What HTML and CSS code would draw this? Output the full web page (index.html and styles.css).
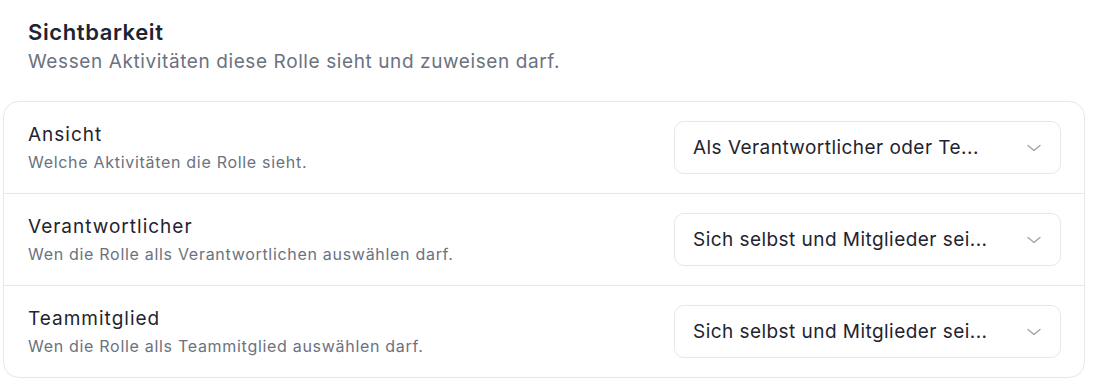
FILE: index.html
```html
<!DOCTYPE html>
<html lang="de">
<head>
<meta charset="utf-8">
<link rel="stylesheet" href="styles.css">
</head>
<body>
<section class="section">
  <header class="section-head">
    <h2 class="section-title">Sichtbarkeit</h2>
    <p class="section-desc">Wessen Aktivitäten diese Rolle sieht und zuweisen darf.</p>
  </header>
  <div class="card">
    <div class="row">
      <div class="row-text">
        <div class="row-label">Ansicht</div>
        <div class="row-hint">Welche Aktivitäten die Rolle sieht.</div>
      </div>
      <div class="select">
        <span class="select-value">Als Verantwortlicher oder Te...</span>
        <svg class="chev" width="14" height="8" viewBox="0 0 14 8"><path d="M1 1.5l6 5 6-5" fill="none" stroke="#9ca3af" stroke-width="1.3" stroke-linecap="round" stroke-linejoin="round"/></svg>
      </div>
    </div>
    <div class="row">
      <div class="row-text">
        <div class="row-label">Verantwortlicher</div>
        <div class="row-hint">Wen die Rolle alls Verantwortlichen auswählen darf.</div>
      </div>
      <div class="select">
        <span class="select-value">Sich selbst und Mitglieder sei...</span>
        <svg class="chev" width="14" height="8" viewBox="0 0 14 8"><path d="M1 1.5l6 5 6-5" fill="none" stroke="#9ca3af" stroke-width="1.3" stroke-linecap="round" stroke-linejoin="round"/></svg>
      </div>
    </div>
    <div class="row">
      <div class="row-text">
        <div class="row-label">Teammitglied</div>
        <div class="row-hint">Wen die Rolle alls Teammitglied auswählen darf.</div>
      </div>
      <div class="select">
        <span class="select-value">Sich selbst und Mitglieder sei...</span>
        <svg class="chev" width="14" height="8" viewBox="0 0 14 8"><path d="M1 1.5l6 5 6-5" fill="none" stroke="#9ca3af" stroke-width="1.3" stroke-linecap="round" stroke-linejoin="round"/></svg>
      </div>
    </div>
  </div>
</section>
</body>
</html>
```
FILE: styles.css
```css
* { box-sizing: border-box; }
html, body { margin: 0; padding: 0; background: #ffffff; }
body {
  font-family: Inter, "Noto Sans", sans-serif;
  color: #1f2430;
  padding: 18px 17px 0 3px;
}
.section-head {
  padding-left: 25px;
  margin-bottom: 27px;
}
.section-title {
  margin: 0;
  font-size: 22px;
  line-height: 28px;
  font-weight: 600;
  color: #1d2433;
  letter-spacing: 0.6px;
}
.section-desc {
  margin: 4px 0 0;
  font-size: 19px;
  line-height: 24px;
  color: #6b7280;
  letter-spacing: 0.6px;
}
.card {
  border: 1px solid #e5e7eb;
  border-radius: 16px;
  overflow: hidden;
}
.row {
  display: flex;
  align-items: center;
  justify-content: space-between;
  padding: 19px 23px 19px 24px;
}
.row + .row { border-top: 1px solid #e5e7eb; }
.row-label {
  font-size: 19px;
  line-height: 24px;
  color: #1f2430;
  letter-spacing: 1px;
}
.row-hint {
  margin-top: 5px;
  font-size: 16px;
  line-height: 20px;
  color: #6b7280;
  letter-spacing: 0.7px;
}
.select {
  width: 387px;
  height: 53px;
  border: 1px solid #e5e7eb;
  border-radius: 10px;
  display: flex;
  align-items: center;
  justify-content: space-between;
  padding: 0 19px 0 18px;
}
.select-value {
  font-size: 19px;
  color: #1f2430;
  letter-spacing: 0.45px;
  white-space: nowrap;
}
.chev { display: block; }
```
